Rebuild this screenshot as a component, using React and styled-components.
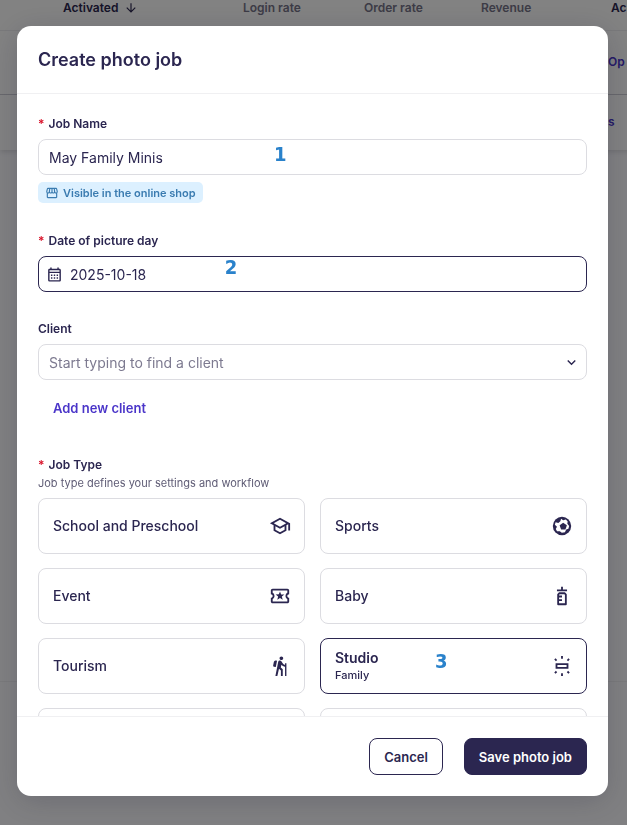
import React, { useState } from 'react';
import styled, { createGlobalStyle } from 'styled-components';
import {
    MdArrowDownward,
    MdHiking,
    MdKeyboardArrowDown,
    MdOutlineCalendarMonth,
    MdOutlineLocalActivity,
    MdOutlineSchool,
    MdOutlineStorefront,
    MdOutlineWbIridescent,
} from 'react-icons/md';

const navy = '#2b2650';

const GlobalStyle = createGlobalStyle`
    *{
        box-sizing:border-box;
    }
    body{
        margin:0;
        overflow:hidden;
        background:#fcfcff;
        color:${navy};
        font-family:Inter, "Liberation Sans", sans-serif;
    }
    button, input{
        font-family:inherit;
        color:inherit;
    }
`;

/* page behind the dialog */
const Page = styled.main`
    height:100vh;
    overflow:hidden;
`;

const ListArea = styled.section`
    min-height:682px;
    border-bottom:1px solid #f0f0f2;
`;

const JobTable = styled.table`
    width:720px;
    table-layout:fixed;
    border-collapse:collapse;
    background:#fff;
    box-shadow:0 2px 5px rgba(0,0,0,.12);
    font-size:12px;
    line-height:16px;

    th, td{
        padding:0;
        text-align:left;
        font-weight:600;
        white-space:nowrap;
    }
    th{
        height:30px;
        padding-bottom:13px;
        color:#77758a;
        border-bottom:1px solid #eeeef1;
    }
    td{
        height:64px;
        border-bottom:1px solid #ccccd4;
    }
    tr:last-child td{
        height:56px;
        border-bottom:0;
    }
    svg{
        vertical-align:-3px;
        margin-left:6px;
    }
    a{
        color:#4a35c9;
        text-decoration:none;
    }
`;

const Col = styled.col`
    width:${props => props.$width}px;
`;

const SortedHead = styled.th`
    && {
        color:${navy};
    }
`;

/* dialog */
const Overlay = styled.div`
    position:fixed;
    inset:0;
    display:flex;
    padding:26px 19px 29px 17px;
    background:rgba(0,0,0,.49);
`;

const Dialog = styled.form`
    flex:1;
    min-width:0;
    display:flex;
    flex-direction:column;
    overflow:hidden;
    background:#fff;
    border-radius:14px;
    box-shadow:0 6px 30px rgba(20,18,50,.2);
`;

const Header = styled.header`
    padding:22px 21px;
    border-bottom:1px solid #f0f0f2;
`;

const Title = styled.h1`
    margin:0;
    font-size:18px;
    line-height:23px;
    font-weight:600;
`;

const Body = styled.div`
    flex:1;
    min-height:0;
    padding:21px 21px 0;
    overflow-y:auto;
    scrollbar-width:none;
`;

const Field = styled.div`
    position:relative;
    margin-bottom:${props => props.$space}px;
`;

const Label = styled.label`
    display:block;
    margin-bottom:7px;
    font-size:12px;
    line-height:17px;
    font-weight:600;
`;

const Star = styled.span`
    margin-right:4px;
    color:#d9142b;
`;

const InputBox = styled.div`
    display:flex;
    align-items:center;
    gap:7px;
    height:36px;
    padding:0 6px 0 ${props => props.$icon ? 7 : 10}px;
    border:1px solid ${props => props.$active ? navy : '#dcdce1'};
    border-radius:8px;
    background:#fff;
`;

const TextInput = styled.input`
    flex:1;
    min-width:0;
    height:34px;
    padding:0;
    border:0;
    outline:0;
    background:transparent;
    font-size:14px;

    &::placeholder{
        color:#7d7a90;
        opacity:1;
    }
`;

const Badge = styled.div`
    display:flex;
    align-items:center;
    gap:4px;
    width:fit-content;
    height:21px;
    margin-top:7px;
    padding:0 7px;
    border-radius:5px;
    background:#dcf0ff;
    color:#3a7bb0;
    font-size:11px;
    line-height:16px;
    font-weight:600;
`;

const LinkButton = styled.button`
    display:block;
    margin-top:18px;
    padding:0 15px;
    border:0;
    background:none;
    color:#4a35c9;
    font-size:13px;
    line-height:20px;
    font-weight:600;
`;

const Marker = styled.span`
    position:absolute;
    left:${props => props.$left}%;
    top:${props => props.$top}px;
    color:#2a82cb;
    font-family:"DejaVu Sans Condensed", "DejaVu Sans", sans-serif;
    font-size:20px;
    line-height:24px;
    font-weight:700;
    pointer-events:none;
`;

const TypeGroup = styled.fieldset`
    min-width:0;
    margin:0;
    padding:0;
    border:0;
`;

const Legend = styled.legend`
    padding:0;
    font-size:12px;
    line-height:17px;
    font-weight:600;
`;

const Hint = styled.p`
    margin:2px 0 7px;
    color:#5f5c75;
    font-size:11px;
    line-height:16px;
`;

const TypeGrid = styled.div`
    display:grid;
    grid-template-columns:1fr 1fr;
    gap:14px 15px;
`;

const TypeCard = styled.label`
    position:relative;
    display:flex;
    align-items:center;
    justify-content:space-between;
    height:56px;
    padding:0 13px 0 14px;
    border:1px solid ${props => props.$active ? navy : '#dcdce1'};
    border-radius:8px;
    font-size:14px;
    line-height:18px;
    font-weight:${props => props.$active ? 600 : 500};

    input{
        position:absolute;
        opacity:0;
    }
`;

const SubType = styled.small`
    display:block;
    font-size:11px;
    line-height:17px;
    font-weight:500;
`;

const Footer = styled.footer`
    display:flex;
    justify-content:flex-end;
    gap:21px;
    padding:21px;
    border-top:1px solid #f0f0f2;
`;

const Button = styled.button`
    height:37px;
    padding:0 14px;
    border:1px solid ${navy};
    border-radius:8px;
    background:${props => props.$primary ? navy : '#fff'};
    color:${props => props.$primary ? '#fff' : navy};
    font-size:13px;
    font-weight:600;
`;

const BabyBottle = ({ size }) => (
    <svg width={size} height={size} viewBox="0 0 24 24" fill="none" stroke="currentColor" strokeWidth="2" strokeLinejoin="round" aria-hidden="true">
        <path d="M12 2v4M6.5 5.8h11M9 9h6l1.2 1.5V21H7.8V10.5zM8 12.5h4M8 16.5h4" />
    </svg>
);

const SoccerBall = ({ size }) => (
    <svg width={size} height={size} viewBox="0 0 24 24" aria-hidden="true">
        <circle cx="12" cy="12" r="10" fill="currentColor" />
        <path
            d="M11 4.2l2.2 1.5 3-.7 2 2-.4 2.5 2 2.5-.8 3-2.4.8-1.4 2.9-3.4.6-2.2-1.7-3 .2-1.4-2.4 1.3-2.6L4.2 10.6l.8-2.6 3 .6 2.2-1.8z"
            fill="#fff"
        />
        <path d="M13.3 8.4l4 2.9-1.5 4.5H11l-1.6-4.5z" fill="currentColor" />
    </svg>
);

const types = [
    { name: 'School and Preschool', icon: MdOutlineSchool },
    { name: 'Sports', icon: SoccerBall },
    { name: 'Event', icon: MdOutlineLocalActivity },
    { name: 'Baby', icon: BabyBottle },
    { name: 'Tourism', icon: MdHiking },
    { name: 'Studio', sub: 'Family', icon: MdOutlineWbIridescent, marker: '3' },
    { name: '' },
    { name: '' },
];

const JobList = () => (
    <Page>
        <ListArea>
            <JobTable>
                <colgroup>
                    <Col $width={63} />
                    <Col $width={180} />
                    <Col $width={121} />
                    <Col $width={117} />
                    <Col $width={127} />
                    <Col $width={112} />
                </colgroup>
                <thead>
                    <tr>
                        <th></th>
                        <SortedHead>Activated<MdArrowDownward size={14} /></SortedHead>
                        <th>Login rate</th>
                        <th>Order rate</th>
                        <th>Revenue</th>
                        <SortedHead>&nbsp;Ac</SortedHead>
                    </tr>
                </thead>
                <tbody>
                    <tr><td colSpan={5}></td><td><a href="#open">Op</a></td></tr>
                    <tr><td colSpan={5}></td><td><a href="#jobs">s</a></td></tr>
                </tbody>
            </JobTable>
        </ListArea>
    </Page>
);

const App = () => {
    const [name, setName] = useState('May Family Minis');
    const [date, setDate] = useState('2025-10-18');
    const [client, setClient] = useState('');
    const [type, setType] = useState(5);

    return (
        <>
        <GlobalStyle />
        <JobList />
        <Overlay>
            <Dialog role="dialog" aria-labelledby="title" onSubmit={e => e.preventDefault()}>
                <Header><Title id="title">Create photo job</Title></Header>
                <Body>
                    <Field $space={29}>
                        <Label htmlFor="name"><Star>*</Star>Job Name</Label>
                        <InputBox>
                            <TextInput id="name" value={name} onChange={e => setName(e.target.value)} />
                        </InputBox>
                        <Marker $left={43} $top={27}>1</Marker>
                        <Badge><MdOutlineStorefront size={14} />Visible in the online shop</Badge>
                    </Field>
                    <Field $space={28}>
                        <Label htmlFor="date"><Star>*</Star>Date of picture day</Label>
                        <InputBox $icon $active>
                            <MdOutlineCalendarMonth size={17} />
                            <TextInput id="date" value={date} onChange={e => setDate(e.target.value)} />
                        </InputBox>
                        <Marker $left={34} $top={23}>2</Marker>
                    </Field>
                    <Field $space={38}>
                        <Label htmlFor="client">Client</Label>
                        <InputBox>
                            <TextInput
                                id="client"
                                role="combobox"
                                aria-expanded="false"
                                placeholder="Start typing to find a client"
                                value={client}
                                onChange={e => setClient(e.target.value)}
                            />
                            <MdKeyboardArrowDown size={17} />
                        </InputBox>
                        <LinkButton type="button">Add new client</LinkButton>
                    </Field>
                    <TypeGroup>
                        <Legend><Star>*</Star>Job Type</Legend>
                        <Hint>Job type defines your settings and workflow</Hint>
                        <TypeGrid>
                            {types.map((item, i) => {
                                const Icon = item.icon;
                                return (
                                    <TypeCard key={i} $active={type === i}>
                                        <input type="radio" name="type" checked={type === i} onChange={() => setType(i)} />
                                        <span>
                                            {item.name}
                                            {item.sub && <SubType>{item.sub}</SubType>}
                                        </span>
                                        {item.marker && <Marker $left={43} $top={10}>{item.marker}</Marker>}
                                        {Icon && <Icon size={22} />}
                                    </TypeCard>
                                );
                            })}
                        </TypeGrid>
                    </TypeGroup>
                </Body>
                <Footer>
                    <Button type="button">Cancel</Button>
                    <Button type="submit" $primary>Save photo job</Button>
                </Footer>
            </Dialog>
        </Overlay>
        </>
    );
};

export default App;
